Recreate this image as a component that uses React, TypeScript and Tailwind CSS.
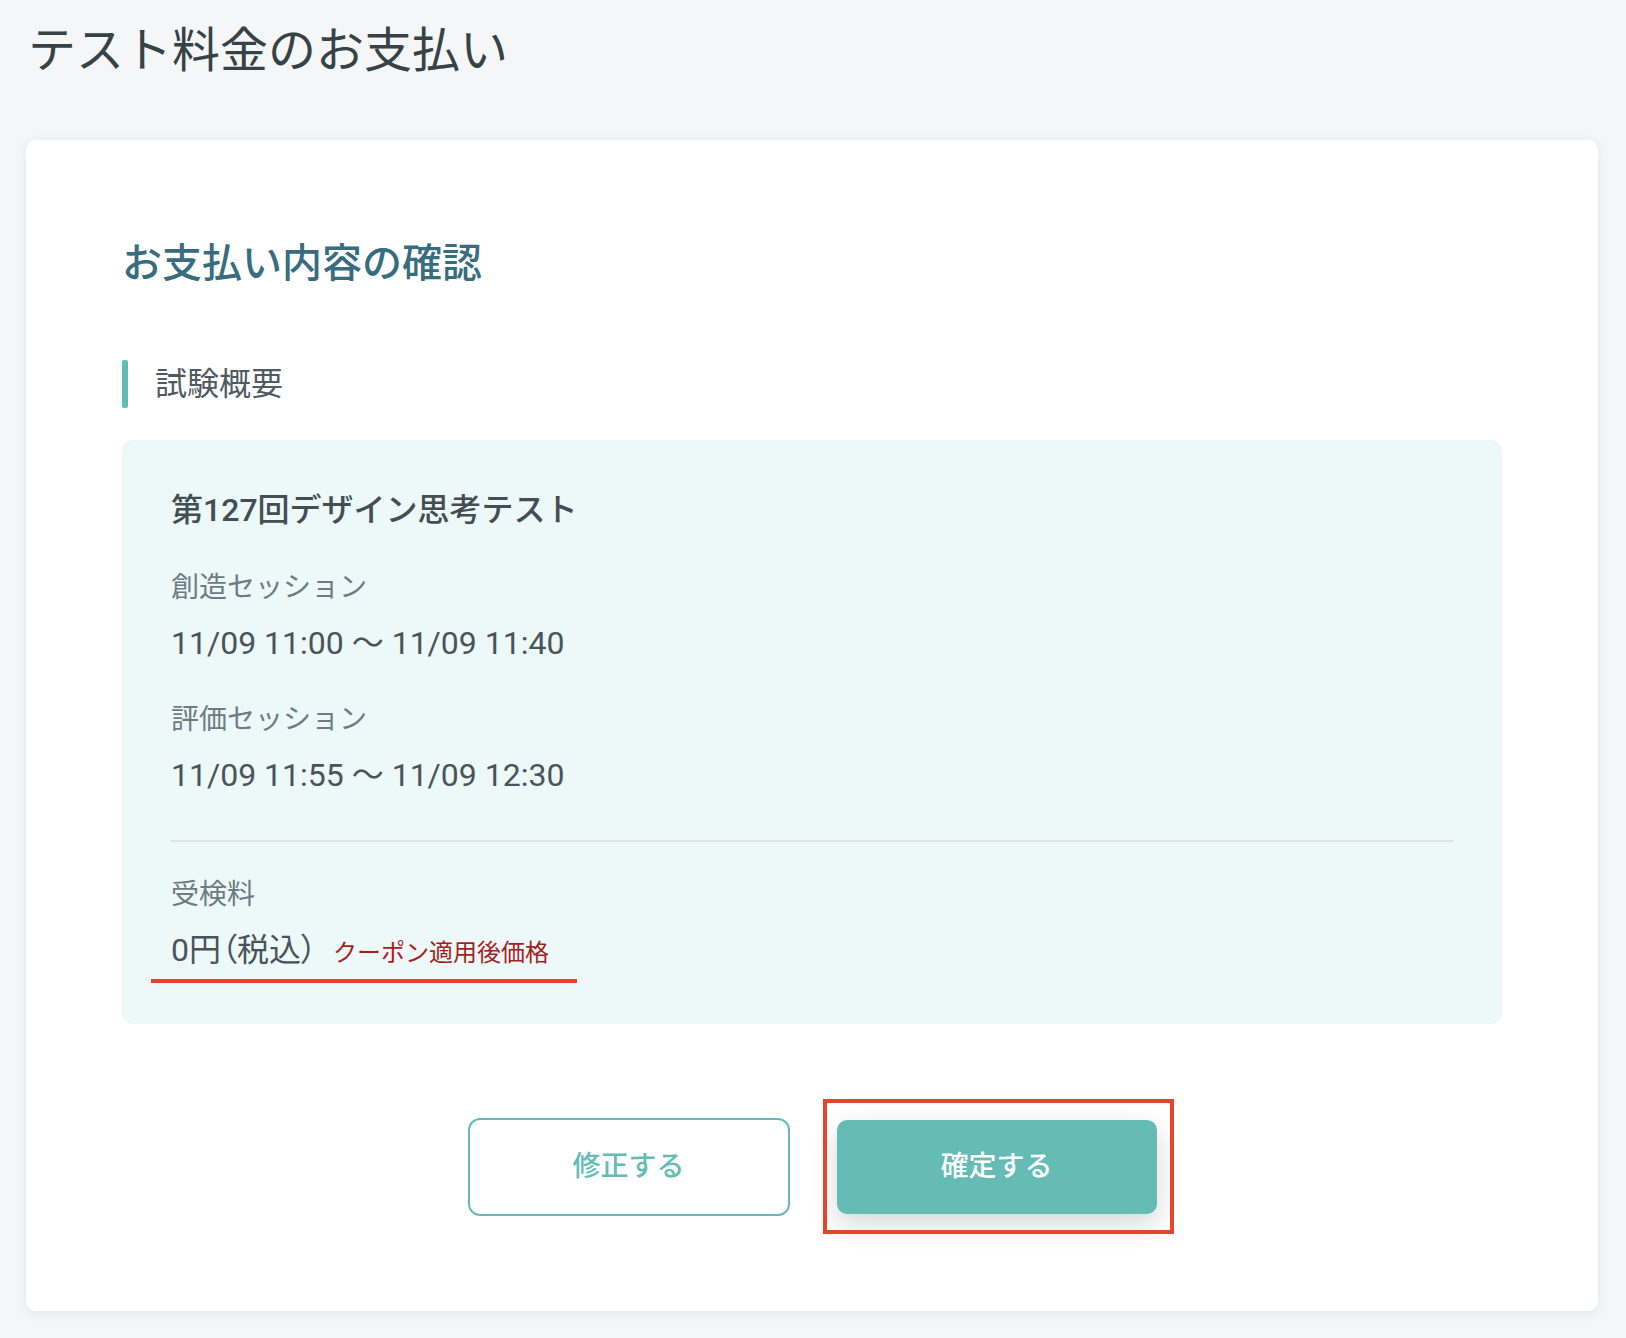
import React from 'react';

const font = { fontFamily: 'Roboto, "Noto Sans CJK JP", "Noto Sans", sans-serif' };

const sessions = [
  { label: '創造セッション', time: '11/09 11:00 〜 11/09 11:40' },
  { label: '評価セッション', time: '11/09 11:55 〜 11/09 12:30' },
];

export default function App() {
  return (
    <div className="min-h-screen bg-[#f5f6f8] pb-[27px]" style={font}>
      <h1 className="pt-[21px] pl-[28px] text-[48px] leading-[60px] font-normal text-[#354246]">
        テスト料金のお支払い
      </h1>

      <div className="mt-[59px] ml-[26px] mr-[28px] rounded-[10px] bg-white px-[96px] pt-[97px] pb-[95px] shadow-[0_2px_14px_rgba(0,0,0,0.07)]">
        <h2 className="text-[40px] leading-[54px] font-medium text-[#386c7f]">お支払い内容の確認</h2>

        {/* section heading */}
        <div className="mt-[69px] flex items-center">
          <span className="h-[48px] w-[6px] rounded-[2px] bg-[#5fbdb4]" />
          <span className="ml-[27px] text-[32px] leading-[48px] text-[#4f5a61]">試験概要</span>
        </div>

        <div className="mt-[32px] rounded-[10px] bg-[#edf8f8] px-[49px] pt-[46px] pb-[41px]">
          <div className="text-[32px] leading-[48px] font-medium text-[#434e54]">第127回デザイン思考テスト</div>

          {sessions.map((s, i) => (
            <div key={i} className={i === 0 ? 'mt-[33px]' : 'mt-[32px]'}>
              <div className="text-[28px] leading-[42px] text-[#6b7c85]">{s.label}</div>
              <div className="mt-[10px] text-[32px] leading-[48px] text-[#49545a]">{s.time}</div>
            </div>
          ))}

          <div className="mt-[41px] h-[2px] bg-[#dde4e7]" />

          <div className="mt-[32px] text-[28px] leading-[42px] text-[#6b7c85]">受検料</div>
          <div className="mt-[10px]">
            <div className="-ml-[20px] inline-flex items-baseline border-b-[4px] border-[#e5452b] pl-[20px] pr-[28px] pb-[5px]">
              <span className="text-[32px] leading-[48px] text-[#49545a] [font-feature-settings:'palt']">0円（税込）</span>
              <span className="ml-[16px] text-[24px] leading-[36px] text-[#a51f1f]">クーポン適用後価格</span>
            </div>
          </div>
        </div>

        <div className="mt-[94px] flex items-center justify-center gap-[47px]">
          <button className="h-[98px] w-[322px] rounded-[12px] border-2 border-[#64bdb5] bg-white text-[28px] font-medium text-[#64bdb5]">
            修正する
          </button>
          <div className="relative">
            <span className="pointer-events-none absolute -left-[14px] -top-[21px] -right-[17px] -bottom-[20px] border-[4px] border-[#e5452b]" />
            <button className="h-[94px] w-[320px] rounded-[10px] bg-[#64bcb4] text-[28px] font-medium text-white shadow-[0_10px_28px_rgba(0,0,0,0.16)]">
              確定する
            </button>
          </div>
        </div>
      </div>
    </div>
  );
}
